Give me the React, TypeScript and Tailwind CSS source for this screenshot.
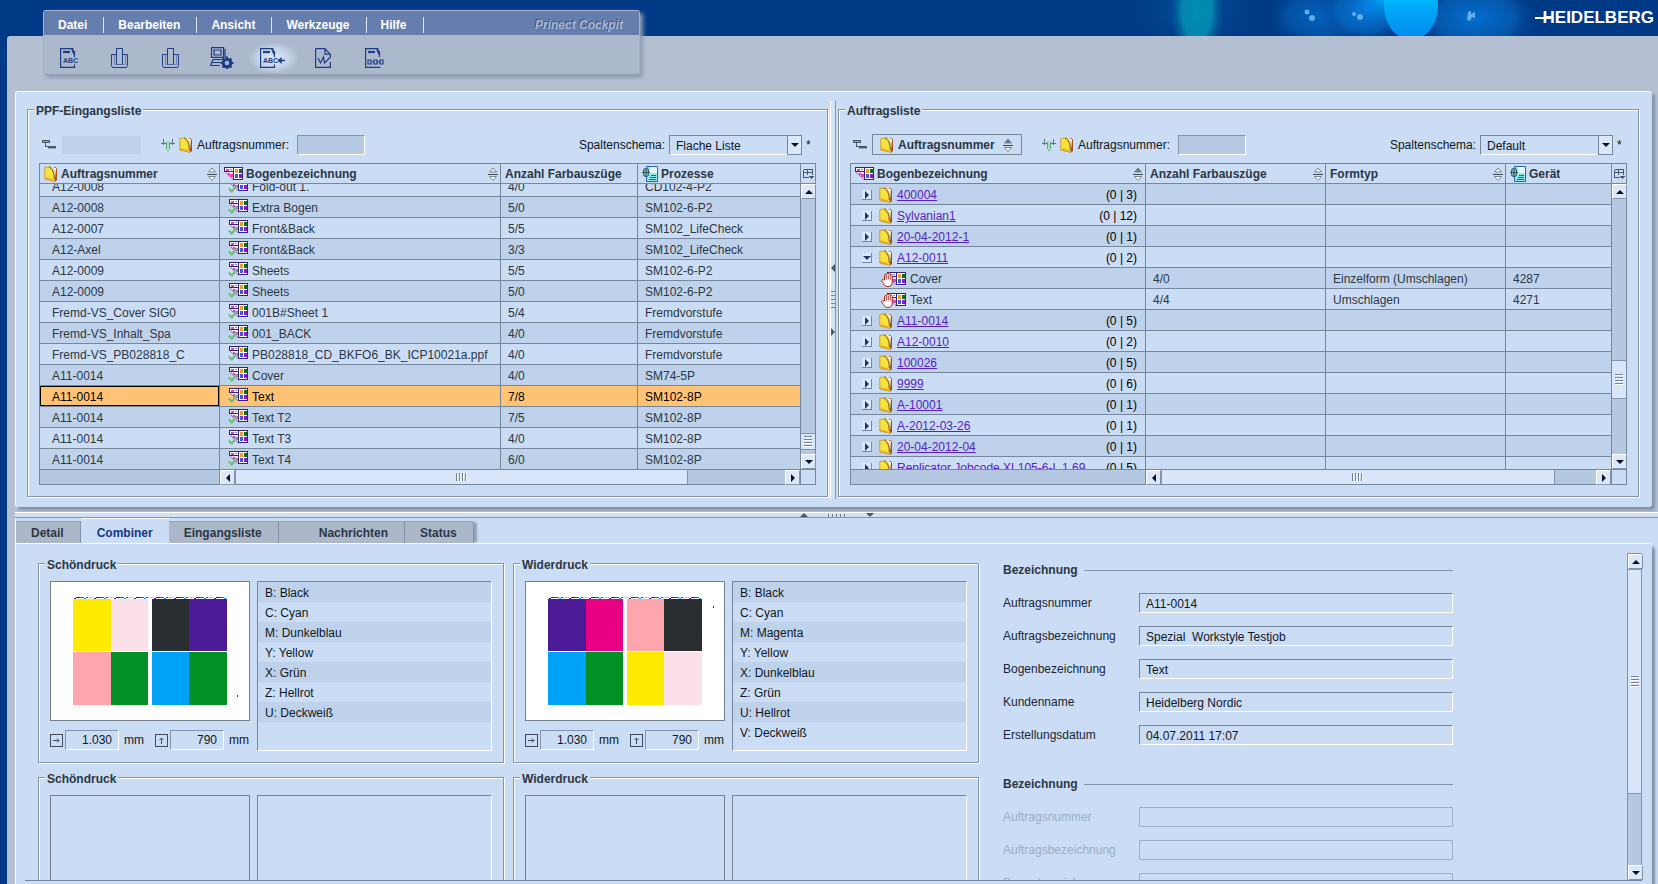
import { useEffect, useRef } from "react";
import type { ReactNode } from "react";
import { clsx } from "clsx";

const INK = "#1f3c88";

/* ---------- icons ---------- */

function FolderIcon() {
  return (
    <svg width="14" height="16" viewBox="0 0 14 16" className="shrink-0">
      <path d="M9 1h2.500l1.500 2v11l-2.500 2z" fill="#a5501a" />
      <path d="M8 .8l4 1.400L10.800 15 9.500 15z" fill="#fff" />
      <path d="M.8 1.500L7 .8l3 4 .2 10.400L.8 13z" fill="#f8e23c" stroke="#c99a30" strokeWidth=".9" />
      <path d="M5 1c3 1.800 5.400 5.500 5.400 12" fill="none" stroke="#6b5a20" strokeWidth=".9" />
      <path d="M1.500 12l7.500 2.300" stroke="#e8a42c" strokeWidth="1.600" />
    </svg>
  );
}

function SheetArt() {
  return (
    <g shapeRendering="crispEdges">
      <path d="M1 5h8v7z" fill="#f3e2f6" />
      <path d="M1.500 5.500l7.500 7" stroke="#7d74a8" shapeRendering="auto" />
      <path d="M.5.5h9v4h-9z" fill="#fff" stroke="#36227c" />
      <path d="M9.500.5h9v12h-9z" fill="#fff" stroke="#36227c" />
      <path d="M2 2h3v2H2zM4 6h2v2H4zM6 7h3v3H6z" fill="#ee3cc0" />
      <path d="M6 2h2v1H6z" fill="#6a8cf0" />
      <path d="M11 2h3v4h-3z" fill="#f59a1c" />
      <path d="M15 2h3v4h-3z" fill="#0c6b1c" />
      <path d="M11 7h3v4h-3z" fill="#4a50e8" />
      <path d="M15 7h3v4h-3z" fill="#8a14d8" />
    </g>
  );
}

function SheetIcon() {
  return (
    <svg width="19" height="13" viewBox="0 0 19 13" className="shrink-0">
      <SheetArt />
    </svg>
  );
}

function SheetOkIcon() {
  return (
    <svg width="20" height="15" viewBox="0 0 20 15" className="shrink-0">
      <g transform="translate(1 0)">
        <SheetArt />
      </g>
      <path d="M.8 10.500l3 3 5-6" fill="none" stroke="#6fbf7b" strokeWidth="2.200" />
    </svg>
  );
}

function SheetHandIcon() {
  return (
    <svg width="26" height="15" viewBox="0 0 26 15" className="shrink-0">
      <g transform="translate(6 0)">
        <SheetArt />
      </g>
      <path
        d="M3.500 8V3.500c0-1.300 1.800-1.300 1.800 0V2.300c0-1.300 2-1.300 2 0v-.5c0-1.300 2-1.300 2 0v1.500c0-1.300 1.900-1.300 1.900 0V10c0 3-1.200 4.500-4.200 4.500-2.700 0-3.500-1-4.500-3L.6 8.800C.4 7.500 2 7 2.600 8z"
        fill="#fff"
        stroke="#a8261e"
      />
      <path d="M5.300 3.500v4M7.300 3v4.500M9.300 3.500v4" stroke="#a8261e" strokeWidth=".9" />
    </svg>
  );
}

function MachineIcon() {
  return (
    <svg width="16" height="16" viewBox="0 0 16 16" className="shrink-0">
      <path d="M4.500.5h11v15h-11z" fill="#8fe8ec" stroke="#2b62b8" />
      <path d="M8 1h7v6H8z" fill="#e4f9ff" />
      <path d="M9 9.500h5M8 11.500h6M7 13.500h7" stroke="#12708c" />
      <rect x="1.500" y="2.500" width="5" height="8" rx="2" fill="#86aeb8" stroke="#2e5a63" />
      <path d="M0 6.500h8M4 3v8" stroke="#2e5a63" />
    </svg>
  );
}

function SortIcon({ active = false }: { active?: boolean }) {
  return (
    <svg width="10" height="14" viewBox="0 0 10 14" className="shrink-0">
      <path d="M5 1l3.500 4h-7z" fill={active ? "#6b7886" : "#f4f8ff"} stroke="#6f7d8e" strokeWidth=".9" />
      <path d="M0 7.500h10" stroke="#3c4854" shapeRendering="crispEdges" />
      <path d="M5 13.500l3.500-4h-7z" fill="#fff" stroke="#6f7d8e" strokeWidth=".9" />
    </svg>
  );
}

function GroupIcon() {
  return (
    <svg width="14" height="9" viewBox="0 0 14 9" shapeRendering="crispEdges" className="shrink-0">
      <path d="M0 0h8v3H0z" fill="#4a5764" />
      <path d="M1 1h6v1H1z" fill="#98a4b3" />
      <path d="M3.500 3v3.500H6" fill="none" stroke="#4a5764" />
      <path d="M6 6h8v2H6z" fill="#4a5764" />
      <path d="M6 8h8v1H6z" fill="#98a4b3" />
    </svg>
  );
}

function FilterIcon() {
  return (
    <svg width="14" height="14" viewBox="0 0 14 14" shapeRendering="crispEdges" className="shrink-0">
      <path d="M2.500 1v6M11.500 1v6M0 5.500h5M9 5.500h5" stroke="#5d7189" />
      <path d="M5 3h4v8H5z" fill="#a8e0b8" />
      <path d="M5.500 4v7M8.500 4v7M6 12.500h2" stroke="#5aa873" />
    </svg>
  );
}

function ColumnsIcon() {
  return (
    <svg width="11" height="10" viewBox="0 0 11 10" shapeRendering="crispEdges">
      <path d="M.5.5h9v5M.5.5v8h5M.5 3.500h9M4.500.5v5" fill="none" stroke="#4a5764" />
      <path d="M6 7h5L8.500 10z" fill="#4a5764" />
    </svg>
  );
}

type Dir = "up" | "down" | "left" | "right";

const ARROWS: Record<Dir, string> = {
  up: "M4 2l4 4H0z",
  down: "M4 6l4-4H0z",
  left: "M2 4l4-4v8z",
  right: "M6 4L2 0v8z",
};

function Arrow({ dir, fill = "#0c121c", size = 8 }: { dir: Dir; fill?: string; size?: number }) {
  return (
    <svg width={size} height={size} viewBox="0 0 8 8" className="shrink-0">
      <path d={ARROWS[dir]} fill={fill} />
    </svg>
  );
}

/* ---------- menu panel ---------- */

function PressGlyph() {
  return (
    <svg width="18" height="20" viewBox="0 0 18 20" fill="none" stroke={INK}>
      <path d="M5.500.5h6v16h-6zM5.500 6.500h-5v11l1 2h14l1-2v-11h-5" />
      <path d="M3.500 6.500v10h11v-10" stroke="#5f72a6" strokeWidth=".8" />
    </svg>
  );
}

function TextPage() {
  return (
    <>
      <path d="M12 .6H.6v18.800h13.900v-3M14.500 3v6" fill="none" stroke={INK} strokeWidth="1.200" />
      <path d="M3 4h7" stroke={INK} strokeWidth="2.200" />
      <path d="M12.500 0c-.5 3 1.800 4 1.500 6.500" fill="none" stroke={INK} strokeWidth="2" />
    </>
  );
}

const TOOLS: { label: string; active?: boolean; icon: ReactNode }[] = [
  {
    label: "Text",
    icon: (
      <svg width="18" height="20" viewBox="0 0 18 20">
        <TextPage />
        <text x="3" y="15" fontSize="7" fontWeight="700" fill={INK}>ABC</text>
      </svg>
    ),
  },
  { label: "Form", icon: <PressGlyph /> },
  { label: "Druck", icon: <PressGlyph /> },
  {
    label: "System",
    icon: (
      <svg width="24" height="22" viewBox="0 0 24 22" fill="none" stroke={INK} strokeWidth="1.200">
        <path d="M1.500.6h12v9.800h-12zM4 3h7v5H4zM15 2v9M3 12.500h11M1.500 15.500h9M0 18.500h10M3 12.500l-2.500 6" />
        <circle cx="17" cy="16" r="3.800" strokeWidth="3" />
        <path
          d="M17 9.500v3M17 19.500v3M10.500 16h3M20.500 16h3M12.500 11.500l2 2M19.500 18.500l2 2M21.500 11.500l-2 2M14.500 18.500l-2 2"
          strokeWidth="2"
        />
      </svg>
    ),
  },
  {
    label: "Text importieren",
    active: true,
    icon: (
      <svg width="26" height="20" viewBox="0 0 26 20">
        <TextPage />
        <text x="3" y="15" fontSize="7" fontWeight="700" fill={INK}>ABC</text>
        <path d="M18 12.500h7M18.500 12.500l2.500-2v4z" fill={INK} stroke={INK} strokeWidth="1.400" />
      </svg>
    ),
  },
  {
    label: "Bericht",
    icon: (
      <svg width="18" height="20" viewBox="0 0 18 20" fill="none" stroke={INK} strokeWidth="1.200">
        <path d="M.6.6H10l5 5.500h-5V.6M.6.6v18.800h14.800V14M15.400 6.500V9" />
        <path d="M3 10l2.500 5 3-6 1 6 6-6" />
      </svg>
    ),
  },
  {
    label: "Daten",
    icon: (
      <svg width="20" height="20" viewBox="0 0 20 20" fill="none" stroke={INK} strokeWidth="1.200">
        <path d="M12 .6H.6v18.800h14.800M14.500 3v6" />
        <path d="M3 4h7" strokeWidth="2.200" />
        <path d="M12.500 0c-.5 3 1.800 4 1.500 6.500" strokeWidth="2" />
        <path d="M3 12h3v4H3zM9 12h3v4H9zM15 12h3v4h-3zM6 14h3M12 14h3" />
      </svg>
    ),
  },
];

function MenuPanel() {
  return (
    <div className="relative -mt-[26px] ml-9 h-[65px] w-[597px] rounded-[3px] border border-[#a3b2d0] border-b-[#929fb4] bg-[#acb8cb] shadow-[3px_3px_4px_#8f9cb0]">
      <nav className="flex h-6 items-end bg-[#667eae] pb-0.5">
        {["Datei", "Bearbeiten", "Ansicht", "Werkzeuge", "Hilfe"].map((m) => (
          <button key={m} className="h-4 border-r border-[#dfe7f5] pr-4 pl-[14px] leading-3 font-bold text-white">
            {m}
          </button>
        ))}
        <span className="mr-4 ml-auto h-4 leading-4 font-bold text-[#a9b8d4] italic [text-shadow:-1px_-1px_0_#40527c]">
          Prinect Cockpit
        </span>
      </nav>
      <div className="flex h-[39px] items-end">
        {TOOLS.map((t) => (
          <button
            key={t.label}
            aria-label={t.label}
            className={clsx(
              "flex h-8 w-[51px] items-center justify-center pr-0.5",
              t.active && "bg-[radial-gradient(closest-side,#dbe8fa,#c5d3e8_60%,transparent)]",
            )}
          >
            {t.icon}
          </button>
        ))}
      </div>
    </div>
  );
}

function HeaderArt() {
  return (
    <svg width="440" height="36" viewBox="0 0 440 36" className="h-9">
      <defs>
        <radialGradient id="teal">
          <stop offset="0" stopColor="#008fb2" />
          <stop offset=".5" stopColor="#0584ae" />
          <stop offset="1" stopColor="#003a86" stopOpacity="0" />
        </radialGradient>
        <radialGradient id="haze">
          <stop offset="0" stopColor="#0560a8" />
          <stop offset="1" stopColor="#003a86" stopOpacity="0" />
        </radialGradient>
        <radialGradient id="blue">
          <stop offset="0" stopColor="#0478dc" />
          <stop offset=".6" stopColor="#0664bc" stopOpacity=".8" />
          <stop offset="1" stopColor="#003a86" stopOpacity="0" />
        </radialGradient>
        <radialGradient id="sky">
          <stop offset="0" stopColor="#00a4f6" />
          <stop offset="1" stopColor="#0478dc" stopOpacity="0" />
        </radialGradient>
        <linearGradient id="cyan" x1="0" y1="0" x2="0" y2="1">
          <stop offset=".25" stopColor="#00c8ff" />
          <stop offset=".55" stopColor="#00a8f8" />
          <stop offset="1" stopColor="#0488ee" />
        </linearGradient>
      </defs>
      <ellipse cx="76" cy="10" rx="76" ry="50" fill="url(#haze)" opacity=".7" />
      <ellipse cx="80" cy="10" rx="30" ry="60" fill="url(#teal)" />
      <ellipse cx="203" cy="16" rx="56" ry="34" fill="url(#blue)" opacity=".65" />
      <ellipse cx="250" cy="10" rx="48" ry="36" fill="url(#blue)" />
      <ellipse cx="266" cy="0" rx="36" ry="24" fill="url(#sky)" />
      <ellipse cx="358" cy="18" rx="66" ry="40" fill="url(#blue)" opacity=".85" />
      <ellipse cx="294" cy="6" rx="27" ry="34" fill="url(#cyan)" />
      <g fill="#7cc0f4" opacity=".8">
        <circle cx="190" cy="12" r="2.500" />
        <circle cx="195" cy="18" r="3" />
        <circle cx="237" cy="14" r="2" />
        <circle cx="243" cy="17" r="3" />
        <path d="M351 12l3-1v3l4-2v6l-3-1-2 4-3-1z" />
      </g>
    </svg>
  );
}

/* ---------- shared pieces ---------- */

function Group({ title, className, children }: { title: string; className?: string; children: ReactNode }) {
  return (
    <section
      className={clsx(
        "flex min-w-0 flex-col border border-[#8594a9] px-[11px] pb-[11px] shadow-[1px_1px_0_#fff,inset_1px_1px_0_#fff]",
        className,
      )}
    >
      <h2 className="-mt-2 -ml-[5px] h-4 w-fit bg-[#cbdcf5] px-0.5 leading-[18px] font-bold">{title}</h2>
      {children}
    </section>
  );
}

function ScrollButton({ dir }: { dir: Dir }) {
  return (
    <button
      aria-label={dir}
      className="flex size-[15px] shrink-0 items-center justify-center border border-[#8594a9] border-t-white border-l-white bg-[#dce8fa]"
    >
      <Arrow dir={dir} />
    </button>
  );
}

function Grip({ vertical = false }: { vertical?: boolean }) {
  return (
    <svg
      width="12"
      height="10"
      viewBox="0 0 12 10"
      shapeRendering="crispEdges"
      className={clsx("shrink-0", vertical && "rotate-90")}
    >
      <path d="M.5 1v8M3.500 1v8M6.500 1v8M9.500 1v8" stroke="#71819a" />
      <path d="M1.500 1v8M4.500 1v8M7.500 1v8M10.500 1v8" stroke="#fff" />
    </svg>
  );
}

// before / thumb / after are the shares of the track on each side of the thumb
function VScroll({ before, thumb, after }: { before: number; thumb: number; after: number }) {
  return (
    <div className="flex min-h-0 flex-1 flex-col bg-[#b5c8e2]">
      <ScrollButton dir="up" />
      <div style={{ flexGrow: before }} className="basis-0" />
      <div
        style={{ flexGrow: thumb }}
        className="flex min-h-0 basis-0 items-center justify-center overflow-hidden border-y border-[#8594a9] bg-[#d9e6fa]"
      >
        <Grip vertical />
      </div>
      <div style={{ flexGrow: after }} className="basis-0" />
      <ScrollButton dir="down" />
    </div>
  );
}

function HScroll({ thumb, after }: { thumb: number; after: number }) {
  return (
    <div className="flex h-[14px] min-w-0 flex-1 bg-[#b5c8e2]">
      <ScrollButton dir="left" />
      <div
        style={{ flexGrow: thumb }}
        className="flex min-w-0 basis-0 items-center justify-center border-x border-[#8594a9] bg-[#d9e6fa]"
      >
        <Grip />
      </div>
      <div style={{ flexGrow: after }} className="basis-0" />
      <ScrollButton dir="right" />
    </div>
  );
}

interface Column {
  title: string;
  width?: string;
  icon?: ReactNode;
  sort?: "none" | "active";
}

interface GridProps {
  columns: Column[];
  scrollTop?: number;
  frozen: string;
  vscroll: ReactNode;
  hscroll: ReactNode;
  children: ReactNode;
}

function DataGrid({ columns, scrollTop = 0, frozen, vscroll, hscroll, children }: GridProps) {
  const body = useRef<HTMLDivElement>(null);

  useEffect(() => {
    if (body.current) body.current.scrollTop = scrollTop;
  }, [scrollTop]);

  return (
    <div className="mt-2 flex h-[322px] border border-[#76869b]">
      <div className="flex min-w-0 flex-1 flex-col">
        <div ref={body} className="h-[305px] overflow-hidden">
          <table className="w-full table-fixed border-separate border-spacing-0">
            <thead>
              <tr>
                {columns.map((c) => (
                  <th
                    key={c.title}
                    className={clsx(
                      "sticky top-0 z-10 h-5 border-r border-b border-[#76869b] bg-[#cbdcf5] p-0 last:border-r-0",
                      c.width,
                    )}
                  >
                    <div className="flex h-[19px] items-center gap-[3px] pr-0.5 pl-1">
                      {c.icon}
                      <span className="truncate">{c.title}</span>
                      {c.sort && (
                        <span className="ml-auto">
                          <SortIcon active={c.sort === "active"} />
                        </span>
                      )}
                    </div>
                  </th>
                ))}
              </tr>
            </thead>
            <tbody>{children}</tbody>
          </table>
        </div>
        <div className="flex h-[15px] border-t border-[#76869b]">
          <div className={clsx("border-r border-[#76869b] bg-[#b5c8e2]", frozen)} />
          {hscroll}
        </div>
      </div>
      <div className="flex w-[15px] flex-col border-l border-[#76869b]">
        <button aria-label="Spalten" className="flex h-5 items-center justify-center border-b border-[#76869b]">
          <ColumnsIcon />
        </button>
        {vscroll}
        <div className="h-[15px] border-t border-[#76869b]" />
      </div>
    </div>
  );
}

const CELL = "h-[21px] border-r border-b border-[#76869b] p-0 leading-[18px] last:border-r-0";
const VALUE = "h-5 truncate pt-0.5";

function ListToolbar({ id, scheme, grouping }: { id: string; scheme: string; grouping: ReactNode }) {
  return (
    <div className="mt-4 flex h-[21px] items-center pl-[3px] text-[#0f1822]">
      <GroupIcon />
      {grouping}
      <span className="ml-5">
        <FilterIcon />
      </span>
      <label htmlFor={`${id}-nr`} className="ml-1 flex items-center gap-1">
        <FolderIcon />
        Auftragsnummer:
      </label>
      <input
        id={`${id}-nr`}
        className="ml-2 h-5 w-[68px] border border-[#8594a9] border-r-white border-b-white bg-[#b6c9e3] px-1"
      />
      <label htmlFor={`${id}-schema`} className="ml-auto">
        Spaltenschema:
      </label>
      <div className="relative ml-1 w-[133px]">
        <select
          id={`${id}-schema`}
          className="h-5 w-full appearance-none border border-[#76869b] border-b-white bg-[#cbdcf5] pt-0.5 pl-1.5"
        >
          <option>{scheme}</option>
        </select>
        <span className="pointer-events-none absolute inset-y-0 right-0 flex w-[15px] items-center justify-center border border-[#76869b] bg-[#dce8fa]">
          <Arrow dir="down" />
        </span>
      </div>
      <span className="ml-1 w-2.5">*</span>
    </div>
  );
}

/* ---------- left list ---------- */

const JOBS = [
  ["A12-0008", "Fold-out 1.", "4/0", "CD102-4-P2"],
  ["A12-0008", "Extra Bogen", "5/0", "SM102-6-P2"],
  ["A12-0007", "Front&Back", "5/5", "SM102_LifeCheck"],
  ["A12-Axel", "Front&Back", "3/3", "SM102_LifeCheck"],
  ["A12-0009", "Sheets", "5/5", "SM102-6-P2"],
  ["A12-0009", "Sheets", "5/0", "SM102-6-P2"],
  ["Fremd-VS_Cover SIG0", "001B#Sheet 1", "5/4", "Fremdvorstufe"],
  ["Fremd-VS_Inhalt_Spa", "001_BACK", "4/0", "Fremdvorstufe"],
  ["Fremd-VS_PB028818_C", "PB028818_CD_BKFO6_BK_ICP10021a.ppf", "4/0", "Fremdvorstufe"],
  ["A11-0014", "Cover", "4/0", "SM74-5P"],
  ["A11-0014", "Text", "7/8", "SM102-8P"],
  ["A11-0014", "Text T2", "7/5", "SM102-8P"],
  ["A11-0014", "Text T3", "4/0", "SM102-8P"],
  ["A11-0014", "Text T4", "6/0", "SM102-8P"],
];
const SELECTED = 10;

function InboxList() {
  return (
    <Group title="PPF-Eingangsliste" className="flex-1">
      <ListToolbar
        id="ppf"
        scheme="Flache Liste"
        grouping={<span className="ml-1.5 h-[18px] w-[79px] bg-[#bfd1ea]" />}
      />
      <DataGrid
        scrollTop={8}
        frozen="w-[180px]"
        columns={[
          { title: "Auftragsnummer", width: "w-[180px]", icon: <FolderIcon />, sort: "none" },
          { title: "Bogenbezeichnung", width: "w-[281px]", icon: <SheetIcon />, sort: "none" },
          { title: "Anzahl Farbauszüge", width: "w-[137px]" },
          { title: "Prozesse", icon: <MachineIcon /> },
        ]}
        vscroll={<VScroll before={235} thumb={15} after={4} />}
        hscroll={<HScroll thumb={451} after={97} />}
      >
        {JOBS.map(([job, sheet, seps, process], i) => {
          const selected = i === SELECTED;
          return (
            <tr
              key={i}
              className={clsx(selected ? "bg-[#ffc375] text-black" : i % 2 ? "bg-[#bfd2eb]" : "bg-[#cbdcf5]")}
            >
              <td className={clsx(CELL, selected && "shadow-[inset_0_0_0_1px_#000]")}>
                <div className={clsx(VALUE, "pl-3")}>{job}</div>
              </td>
              <td className={CELL}>
                <div className="flex h-5 gap-1 pt-0.5 pl-2 whitespace-nowrap">
                  <SheetOkIcon />
                  {sheet}
                </div>
              </td>
              <td className={CELL}>
                <div className={clsx(VALUE, "pl-[7px]")}>{seps}</div>
              </td>
              <td className={CELL}>
                <div className={clsx(VALUE, "pl-[7px]")}>{process}</div>
              </td>
            </tr>
          );
        })}
      </DataGrid>
    </Group>
  );
}

/* ---------- right list ---------- */

interface OrderRow {
  name: string;
  count?: string;
  open?: boolean;
  seps?: string;
  form?: string;
  device?: string;
}

const ORDERS: OrderRow[] = [
  { name: "400004", count: "(0 | 3)" },
  { name: "Sylvanian1", count: "(0 | 12)" },
  { name: "20-04-2012-1", count: "(0 | 1)" },
  { name: "A12-0011", count: "(0 | 2)", open: true },
  { name: "Cover", seps: "4/0", form: "Einzelform (Umschlagen)", device: "4287" },
  { name: "Text", seps: "4/4", form: "Umschlagen", device: "4271" },
  { name: "A11-0014", count: "(0 | 5)" },
  { name: "A12-0010", count: "(0 | 2)" },
  { name: "100026", count: "(0 | 5)" },
  { name: "9999", count: "(0 | 6)" },
  { name: "A-10001", count: "(0 | 1)" },
  { name: "A-2012-03-26", count: "(0 | 1)" },
  { name: "20-04-2012-04", count: "(0 | 1)" },
  { name: "Replicator Jobcode XL105-6-L 1.69", count: "(0 | 5)" },
];

function OrderList() {
  return (
    <Group title="Auftragsliste" className="flex-1">
      <ListToolbar
        id="orders"
        scheme="Default"
        grouping={
          <button className="ml-[5px] flex h-[21px] w-[150px] items-center border border-[#76869b] pl-[7px] font-bold text-[#2b3743]">
            <FolderIcon />
            <span className="mr-2 ml-1">Auftragsnummer</span>
            <SortIcon active />
          </button>
        }
      />
      <DataGrid
        frozen="w-[295px]"
        columns={[
          { title: "Bogenbezeichnung", width: "w-[295px]", icon: <SheetIcon />, sort: "active" },
          { title: "Anzahl Farbauszüge", width: "w-[180px]", sort: "none" },
          { title: "Formtyp", width: "w-[180px]", sort: "none" },
          { title: "Gerät", icon: <MachineIcon /> },
        ]}
        vscroll={<VScroll before={162} thumb={37} after={55} />}
        hscroll={<HScroll thumb={394} after={41} />}
      >
        {ORDERS.map((o, i) => (
          <tr key={o.name} className={i % 2 ? "bg-[#cbdcf5]" : "bg-[#bfd2eb]"}>
            <td className={CELL}>
              {o.count ? (
                <div className="flex h-5 items-center pt-0.5 pr-2 pl-[11px] whitespace-nowrap">
                  <button
                    aria-label={o.open ? "Zuklappen" : "Aufklappen"}
                    className="mr-[7px] flex size-[10px] items-center justify-center border-r border-b border-[#6f87ab] bg-[#dce8fa]"
                  >
                    <Arrow dir={o.open ? "down" : "right"} fill="#16396e" />
                  </button>
                  <FolderIcon />
                  <a href={`#${i}`} className="ml-1 text-[#5a1ec0] underline">
                    {o.name}
                  </a>
                  <span className="ml-auto text-black">{o.count}</span>
                </div>
              ) : (
                <div className="flex h-5 items-center gap-[3px] pt-0.5 pl-[30px]">
                  <SheetHandIcon />
                  {o.name}
                </div>
              )}
            </td>
            {[o.seps, o.form, o.device].map((v, n) => (
              <td key={n} className={CELL}>
                <div className={clsx(VALUE, "pl-[7px]")}>{v}</div>
              </td>
            ))}
          </tr>
        ))}
      </DataGrid>
    </Group>
  );
}

function Splitter() {
  return (
    <div className="mx-0.5 -mt-2 -mb-0.5 flex w-1.5 shrink-0 flex-col items-center justify-center gap-[18px] border-r border-l border-[#8594a9] border-l-white bg-[#d3e1f6]">
      <Arrow dir="left" fill="#4a5764" />
      <svg width="4" height="20" viewBox="0 0 4 20" shapeRendering="crispEdges">
        <path d="M0 1.500h4M0 5.500h4M0 9.500h4M0 13.500h4M0 17.500h4" stroke="#71819a" />
      </svg>
      <Arrow dir="right" fill="#4a5764" />
    </div>
  );
}

/* ---------- combiner ---------- */

const BLACK = "#2a2e31";
const VIOLET = "#4b1a96";
const GREEN = "#028f24";
const ROSE = "#fea5ad";
const YELLOW = "#ffeb00";
const PALE = "#fbe0ea";
const CYAN = "#00a2f5";
const MAGENTA = "#e80084";

interface Side {
  title: string;
  tiles: string[];
  mark: [number, number];
  inks: string[];
}

const FRONT: Side = {
  title: "Schöndruck",
  tiles: [YELLOW, PALE, BLACK, VIOLET, ROSE, GREEN, CYAN, GREEN],
  mark: [186, 114],
  inks: ["B: Black", "C: Cyan", "M: Dunkelblau", "Y: Yellow", "X: Grün", "Z: Hellrot", "U: Deckweiß"],
};

const BACK: Side = {
  title: "Widerdruck",
  tiles: [VIOLET, MAGENTA, ROSE, BLACK, CYAN, GREEN, YELLOW, PALE],
  mark: [187, 25],
  inks: ["B: Black", "C: Cyan", "M: Magenta", "Y: Yellow", "X: Dunkelblau", "Z: Grün", "U: Hellrot", "V: Deckweiß"],
};

const TILE_X = [22, 60, 101, 138];
const STRIP = [VIOLET, GREEN, MAGENTA, YELLOW, BLACK, CYAN, ROSE, BLACK, GREEN, YELLOW];

function SheetPreview({ side }: { side: Side }) {
  return (
    <svg width="198" height="138" viewBox="0 0 198 138" shapeRendering="crispEdges">
      <rect width="198" height="138" fill="#fff" />
      {Array.from({ length: 76 }, (_, i) => (
        <rect key={i} x={23 + i * 2} y={i % 5 ? 15 : 16} width="2" height="1" fill={STRIP[(i * 7) % 10]} />
      ))}
      {side.tiles.map((fill, i) => (
        <rect
          key={i}
          x={TILE_X[i % 4]}
          y={i < 4 ? 17 : 70}
          width={i % 4 === 1 || i % 4 === 2 ? 37 : 38}
          height={i < 4 ? 52 : 53}
          fill={fill}
        />
      ))}
      <rect x={side.mark[0]} y={side.mark[1] - 1} width="1" height="2" fill="#333" />
    </svg>
  );
}

function Measure({ id, label, value, dir }: { id: string; label: string; value: string; dir: "right" | "up" }) {
  return (
    <div className="flex h-5 items-center text-[#0f1822]">
      <svg width="13" height="13" viewBox="0 0 13 13" className="mr-0.5" fill="none" stroke="#3c4c5c">
        <rect x=".5" y=".5" width="12" height="12" />
        <path d={dir === "right" ? "M3 6.500h6M7 4.500l2 2-2 2" : "M6.500 10V4M4.500 6l2-2 2 2"} />
      </svg>
      <input
        id={id}
        aria-label={label}
        readOnly
        defaultValue={value}
        className="h-5 w-[54px] border border-[#8594a9] border-r-white border-b-white bg-transparent pr-1.5 text-right"
      />
      <label htmlFor={id} className="w-[26px] pl-[5px]">
        mm
      </label>
    </div>
  );
}

function SidePanel({ side, empty = false }: { side: Side; empty?: boolean }) {
  return (
    <Group title={side.title}>
      <div className="mt-[9px] flex h-[170px] gap-[7px]">
        <div className="flex w-[200px] shrink-0 flex-col gap-[9px]">
          <div className="h-[140px] border border-[#76808c]">{!empty && <SheetPreview side={side} />}</div>
          {!empty && (
            <div className="flex justify-between">
              <Measure id={`${side.title}-w`} label="Breite" value="1.030" dir="right" />
              <Measure id={`${side.title}-h`} label="Höhe" value="790" dir="up" />
            </div>
          )}
        </div>
        <ul className="min-w-0 flex-1 border border-[#76869b] border-r-white border-b-white text-[#0f1822]">
          {!empty &&
            side.inks.map((ink, i) => (
              <li key={ink} className={clsx("h-5 pl-[7px] leading-[22px]", i % 2 === 0 && "bg-[#bfd2eb]")}>
                {ink}
              </li>
            ))}
        </ul>
      </div>
    </Group>
  );
}

const FIELDS = [
  ["Auftragsnummer", "A11-0014"],
  ["Auftragsbezeichnung", "Spezial  Workstyle Testjob"],
  ["Bogenbezeichnung", "Text"],
  ["Kundenname", "Heidelberg Nordic"],
  ["Erstellungsdatum", "04.07.2011 17:07"],
];

function DetailForm({ id, disabled = false }: { id: string; disabled?: boolean }) {
  return (
    <form className="ml-[15px] flex max-w-[450px] flex-col gap-[13px]">
      <h3 className="mb-[3px] flex h-[14px] items-center gap-1.5 font-bold after:h-px after:flex-1 after:bg-[#8594a9]">
        Bezeichnung
      </h3>
      {FIELDS.map(([label, value]) => (
        <div key={label} className="flex h-5 items-center">
          <label
            htmlFor={`${id}-${label}`}
            className={clsx("w-[136px] shrink-0", disabled ? "text-[#9cadc6]" : "text-[#1a2633]")}
          >
            {label}
          </label>
          <input
            id={`${id}-${label}`}
            readOnly
            disabled={disabled}
            defaultValue={disabled ? "" : value}
            className={clsx(
              "h-5 min-w-0 flex-1 rounded-[1px] border bg-transparent px-1.5 pt-px whitespace-pre text-[#0f1822]",
              disabled ? "border-[#9cadc6]" : "border-[#76869b] border-r-white border-b-white",
            )}
          />
        </div>
      ))}
    </form>
  );
}

const TABS = ["Detail", "Combiner", "Eingangsliste", "Nachrichten", "Status"];

function CombinerArea() {
  return (
    <div className="ml-2 flex min-h-0 flex-1 flex-col border-l border-white bg-[#cbdcf5]">
      <div role="tablist" className="flex h-[25px] items-end">
        {TABS.map((t) =>
          t === "Combiner" ? (
            <button
              key={t}
              role="tab"
              aria-selected
              className="-mb-px h-[26px] border-t border-white bg-[#cbdcf5] px-4 pt-0.5 font-bold text-[#17377f]"
            >
              {t}
            </button>
          ) : (
            <button
              key={t}
              role="tab"
              className={clsx(
                "h-[22px] border-t border-r border-[#8492a6] border-t-[#97a5b9] bg-[#acb8ca] pr-4 font-bold",
                t === "Nachrichten" ? "pl-10" : "pl-[15px]",
                t === "Status" && "rounded-tr-[3px] shadow-[4px_0_2px_-1px_#93a1b6]",
              )}
            >
              {t}
            </button>
          ),
        )}
      </div>
      <div className="mr-1.5 flex min-h-0 flex-1 flex-col rounded-tr-[3px] border-t border-white pr-2.5 pb-[3px] pl-[9px] shadow-[3px_4px_3px_#7f8ea4]">
        <div className="mt-[9px] flex min-h-0 flex-1 border-b border-[#76869b]">
          <div className="grid min-w-0 flex-1 grid-cols-[466fr_466fr_639fr] content-start gap-x-[9px] gap-y-[14px] overflow-hidden pt-2.5 pl-[13px]">
            <SidePanel side={FRONT} />
            <SidePanel side={BACK} />
            <DetailForm id="sheet1" />
            <SidePanel side={FRONT} empty />
            <SidePanel side={BACK} empty />
            <DetailForm id="sheet2" disabled />
          </div>
          <div className="flex w-[15px] flex-col border-x border-t border-[#8594a9]">
            <VScroll before={0} thumb={225} after={71} />
          </div>
        </div>
      </div>
    </div>
  );
}

export default function App() {
  return (
    <div className="flex h-screen min-h-[640px] flex-col overflow-hidden bg-[#003a86] font-['Liberation_Sans',Arial,sans-serif] text-[12px] leading-4 text-[#2b3743]">
      <header className="flex h-9 shrink-0 justify-end overflow-hidden">
        <HeaderArt />
        <div className="-ml-[22px] flex items-center pr-1 text-[17px] font-bold text-white">
          <span className="-mr-2 h-0.5 w-4 bg-white" />
          <span>HEIDELBERG</span>
        </div>
      </header>
      <main className="ml-[7px] flex min-h-0 flex-1 flex-col rounded-tl-[3px] bg-[#b4c0d2]">
        <MenuPanel />
        <div className="mt-4 mr-1.5 ml-2 flex shrink-0 rounded-[3px] border-t border-l border-white bg-[#cbdcf5] pt-[17px] pr-[13px] pb-2.5 pl-[11px] shadow-[3px_3px_3px_#8391a6]">
          <InboxList />
          <Splitter />
          <OrderList />
        </div>
        <div className="relative mt-[5px] ml-2 flex h-1.5 shrink-0 items-center justify-center gap-5 border-t border-b border-white border-b-[#8594a9] bg-[#d3e1f6]">
          <Arrow dir="up" fill="#4a5764" />
          <svg width="18" height="3" viewBox="0 0 18 3" shapeRendering="crispEdges">
            <path d="M.5 0v3M4.500 0v3M8.500 0v3M12.500 0v3M16.500 0v3" stroke="#71819a" />
          </svg>
          <Arrow dir="down" fill="#4a5764" />
        </div>
        <CombinerArea />
      </main>
    </div>
  );
}
